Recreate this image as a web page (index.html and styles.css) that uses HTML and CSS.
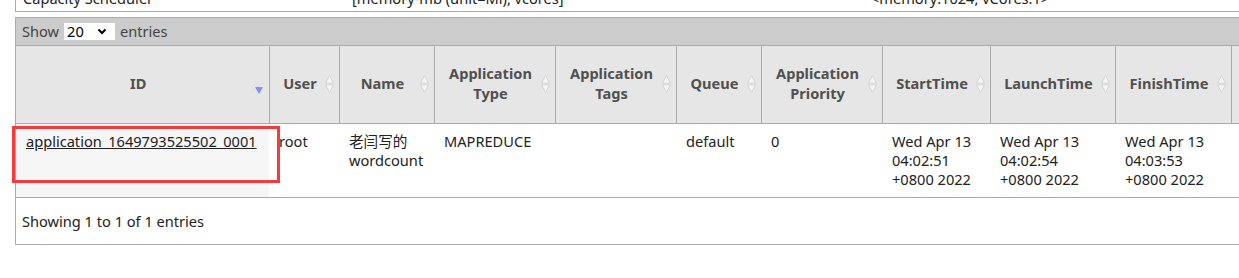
FILE: index.html
```html
<!doctype html>
<html lang="en">
    <head>
        <meta charset="utf-8" />
        <title>All Applications</title>
        <link rel="stylesheet" href="styles.css">
    </head>
    <body>
        <div class="page">
            <table class="info">
                <tr>
                    <td class="info__name">Capacity Scheduler</td>
                    <td class="info__res">[memory-mb (unit=Mi), vcores]</td>
                    <td>&lt;memory:1024, vCores:1&gt;</td>
                </tr>
            </table>

            <div class="apps">
                <div class="apps__toolbar">
                    Show
                    <span class="apps__select">20
                        <svg width="10" height="7" viewBox="0 0 10 7">
                            <path d="M1.5 1.5 L5 5 L8.5 1.5" fill="none" stroke="#000" stroke-width="2" />
                        </svg>
                    </span>
                    entries
                </div>

                <table class="grid">
                    <colgroup>
                        <col style="width: 253px" />
                        <col style="width: 70px" />
                        <col style="width: 95px" />
                        <col style="width: 121px" />
                        <col style="width: 121px" />
                        <col style="width: 85px" />
                        <col style="width: 121px" />
                        <col style="width: 108px" />
                        <col style="width: 125px" />
                        <col style="width: 116px" />
                        <col style="width: 110px" />
                    </colgroup>
                    <thead>
                        <tr>
                            <th>ID<span class="sort sort--desc"></span></th>
                            <th>User<span class="sort"></span></th>
                            <th>Name<span class="sort"></span></th>
                            <th>Application Type<span class="sort"></span></th>
                            <th>Application Tags<span class="sort"></span></th>
                            <th>Queue<span class="sort"></span></th>
                            <th>Application Priority<span class="sort"></span></th>
                            <th>StartTime<span class="sort"></span></th>
                            <th>LaunchTime<span class="sort"></span></th>
                            <th>FinishTime<span class="sort"></span></th>
                            <th>State<span class="sort"></span></th>
                        </tr>
                    </thead>
                    <tbody>
                        <tr>
                            <td class="grid__sorted">
                                <a href="#">application_1649793525502_0001</a>
                                <div class="mark"></div>
                            </td>
                            <td>root</td>
                            <td>老闫写的 wordcount</td>
                            <td>MAPREDUCE</td>
                            <td></td>
                            <td>default</td>
                            <td>0</td>
                            <td>Wed Apr 13<br />04:02:51<br />+0800 2022</td>
                            <td>Wed Apr 13<br />04:02:54<br />+0800 2022</td>
                            <td>Wed Apr 13<br />04:03:53<br />+0800 2022</td>
                            <td>FINISHED</td>
                        </tr>
                    </tbody>
                </table>

                <div class="apps__footer">Showing 1 to 1 of 1 entries</div>
            </div>
        </div>
    </body>
</html>
```

FILE: styles.css
```css
body {
    margin: 0;
    overflow: hidden;
    background: white;
    color: #222;
    font-family: 'Noto Sans', 'Noto Sans CJK SC', sans-serif;
    font-size: 14.6px;
    line-height: 19px;
}

.page {
    padding-left: 15px;
    width: 1500px;
}

.info {
    margin-top: -14px;
    width: 100%;
    border-collapse: collapse;
    border-left: 1px solid #aaa;
    border-bottom: 1px solid #aaa;
}

.info td {
    padding: 3px 7px;
}

.info__name {
    width: 315px;
}

.info__res {
    width: 505px;
}

.apps {
    margin-top: 5px;
    border-left: 1px solid #aaa;
    border-top: 1px solid #aaa;
}

.apps__toolbar {
    height: 27px;
    display: flex;
    align-items: center;
    gap: 5px;
    padding-left: 6px;
    background: #ccc;
    color: #444;
}

.apps__select {
    display: flex;
    align-items: center;
    justify-content: space-between;
    width: 40px;
    height: 17px;
    padding: 0 8px 0 3px;
    background: white;
    color: #000;
}

.grid {
    border-collapse: collapse;
    table-layout: fixed;
}

.grid th {
    position: relative;
    height: 74px;
    padding: 0 18px 3px 10px;
    background: #e6e6e6;
    color: #505050;
    font-weight: bold;
    line-height: 20px;
    border-top: 1px solid #aaa;
    border-right: 1px solid #aaa;
    border-bottom: 1px solid #aaa;
}

.grid td {
    padding: 8px 10px;
    vertical-align: top;
    border-bottom: 1px solid #aaa;
}

.grid__sorted {
    position: relative;
    background: #f6f6f6;
}

.grid a {
    color: #222;
}

.sort {
    position: absolute;
    right: 5px;
    top: 50%;
    width: 9px;
    height: 18px;
    margin-top: -10px;
    background: url("data:image/svg+xml,%3Csvg xmlns='http://www.w3.org/2000/svg' width='9' height='18' viewBox='0 0 9 18'%3E%3Cg fill='%23f6f6f6' stroke='%23cfcfcf' stroke-width='0.8'%3E%3Cpath d='M4.5 0.6 L8.4 8.2 L0.6 8.2 Z'/%3E%3Cpath d='M0.6 9.8 L8.4 9.8 L4.5 17.4 Z'/%3E%3C/g%3E%3C/svg%3E") no-repeat;
}

.sort--desc {
    background: none;
    width: 0;
    height: 0;
    right: 6px;
    margin-top: 0;
    top: 41px;
    border-left: 4px solid transparent;
    border-right: 4px solid transparent;
    border-top: 7px solid #8b8bff;
}

.mark {
    position: absolute;
    left: -4px;
    top: 2px;
    width: 262px;
    height: 51px;
    border: 3px solid #f43a3a;
}

.apps__footer {
    height: 46px;
    display: flex;
    align-items: center;
    padding-left: 6px;
    border-bottom: 1px solid #aaa;
}
```
